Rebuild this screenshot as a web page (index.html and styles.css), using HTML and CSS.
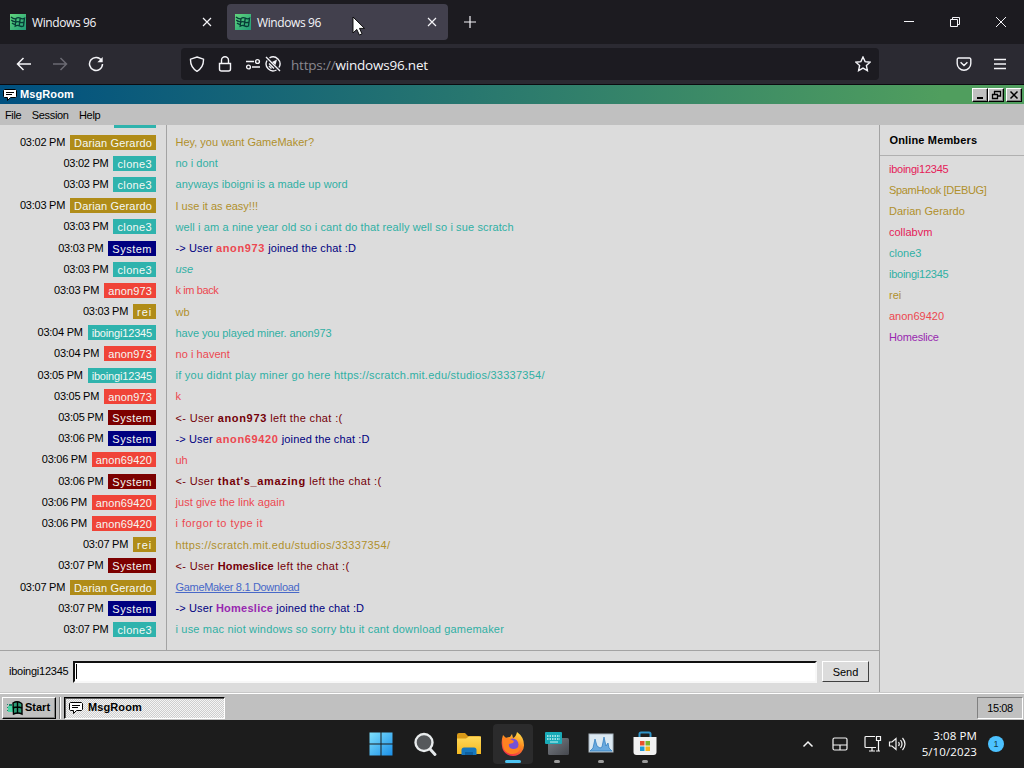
FILE: index.html
```
<!DOCTYPE html>
<html lang="en">
<head>
<meta charset="utf-8">
<title>Windows 96</title>
<link rel="stylesheet" href="styles.css">
</head>
<body>
<svg width="0" height="0" class="defs">
  <defs>
    <linearGradient id="fav" x1="0" y1="0" x2="1" y2="1"><stop offset="0" stop-color="#62d67c"/><stop offset="1" stop-color="#1f9a78"/></linearGradient>
    <linearGradient id="win" x1="0" y1="0" x2="1" y2="1"><stop offset="0" stop-color="#7fe0fb"/><stop offset="1" stop-color="#1a8fe8"/></linearGradient>
    <linearGradient id="folder" x1="0" y1="0" x2="0" y2="1"><stop offset="0" stop-color="#ffd95a"/><stop offset="1" stop-color="#f5b921"/></linearGradient>
    <linearGradient id="fox" x1=".8" y1="0" x2=".3" y2="1"><stop offset="0" stop-color="#ffe14a"/><stop offset=".45" stop-color="#ff8a1f"/><stop offset="1" stop-color="#f0284f"/></linearGradient>
    <linearGradient id="term" x1="0" y1="0" x2="1" y2="1"><stop offset="0" stop-color="#7b7f86"/><stop offset="1" stop-color="#45484e"/></linearGradient>
    <symbol id="favicon" viewBox="0 0 16 16">
      <rect width="16" height="16" fill="url(#fav)"/>
      <g fill="none" stroke="#073c36" stroke-width="1.3"><path d="M6 4.500q2-1.500 4.300-.3t4.200 0L13.500 12q-2 1-4-.1t-4.300.2zM10.200 4.300l-1 7.500M5.800 8.100q2-1 4 0t4.100 0M1 3q2.500 2.300 5 1.800M1.300 6q2 2 4.400 1.600M2 9q1.600 1.600 3.400 1.200"/></g>
    </symbol>
    <symbol id="bubble" viewBox="0 0 16 16">
      <path d="M2.500 2.500h11l1 1v6l-1 1h-5l-3 3v-3h-3l-1-1v-6z" fill="#fff" stroke="#000"/>
      <path d="M4 5.500h8M4 7.500h6" stroke="#000"/>
    </symbol>
  </defs>
</svg>

<header class="tabs">
  <div class="tab"><svg class="fav"><use href="#favicon"/></svg><span>Windows 96</span><svg class="tab-x" viewBox="0 0 10 10"><path d="M1 1l8 8M9 1l-8 8"/></svg></div>
  <div class="tab active"><svg class="fav"><use href="#favicon"/></svg><span>Windows 96</span><svg class="tab-x" viewBox="0 0 10 10"><path d="M1 1l8 8M9 1l-8 8"/></svg></div>
  <svg class="plus" viewBox="0 0 12 12"><path d="M6 0v12M0 6h12"/></svg>
  <div class="win-controls">
    <svg viewBox="0 0 12 12"><path d="M1 5.500h10"/></svg>
    <svg viewBox="0 0 12 12"><path d="M1.500 3.500h7v7h-7zM3.500 3.500v-2h7v7h-2"/></svg>
    <svg viewBox="0 0 12 12"><path d="M1 1l10 10M11 1L1 11"/></svg>
  </div>
</header>

<nav class="toolbar">
  <svg class="nav-icon" viewBox="0 0 16 16"><path d="M15 8H1.500M7.500 2l-6 6 6 6"/></svg>
  <svg class="nav-icon dim" viewBox="0 0 16 16"><path d="M1 8h13.500M8.500 2l6 6-6 6"/></svg>
  <svg class="nav-icon" viewBox="0 0 16 16"><path d="M13.600 4.600A6.500 6.500 0 1 0 14.500 8"/><path d="M14.700 1v5.300H9.400z" class="solid"/></svg>
  <div class="urlbar">
    <svg class="i-shield" viewBox="0 0 16 16"><path d="M8 1L14.500 3.200C14.700 9 13 12.500 8 15.300C3 12.500 1.300 9 1.500 3.200z"/></svg>
    <svg class="i-lock" viewBox="0 0 16 16"><path d="M2.500 7.500h11v5.500a2 2 0 0 1-2 2h-7a2 2 0 0 1-2-2zM4.500 7.500V4.300a3.500 3.500 0 0 1 7 0v3.200"/></svg>
    <svg class="i-perm" viewBox="0 0 16 16"><path d="M1 5.500h8M7 11h8"/><circle cx="12.500" cy="5.500" r="1.900"/><circle cx="3.500" cy="11" r="1.900"/></svg>
    <svg class="i-auto" viewBox="0 0 16 16"><path d="M4.500 1.900A7 7 0 0 1 14 11.500M11.500 14A7 7 0 0 1 2 4.500M1 1l14 14M4 7.500l5 5M4 10l2.500 2.500"/><path class="solid" d="M7 6l5-2.500L10.500 9z"/></svg>
    <span class="url"><i>https://</i>windows96.net</span>
    <svg class="i-star" viewBox="0 0 16 16"><path d="M8 1l2.100 4.600 5 .6-3.700 3.400 1 5L8 12.100l-4.400 2.500 1-5L.9 6.200l5-.6z"/></svg>
  </div>
  <svg class="i-pocket" viewBox="0 0 16 16"><path d="M2.500 2h11a1.300 1.300 0 0 1 1.300 1.300V7.500a6.800 6.800 0 0 1-13.600 0V3.300A1.300 1.300 0 0 1 2.500 2zM4.600 6.200L8 9.500l3.400-3.300"/></svg>
  <svg class="i-menu" viewBox="0 0 12 12"><path d="M0 1.500h12M0 6h12M0 10.500h12"/></svg>
</nav>

<main class="desktop">
  <div class="titlebar">
    <svg class="bubble"><use href="#bubble"/></svg><b>MsgRoom</b>
    <div class="caption">
      <button><svg viewBox="0 0 12 10"><path d="M3 8h6" stroke-width="2"/></svg></button><button><svg viewBox="0 0 12 10"><path d="M4 1.500h6.500v4.500H8M4.500 1v3M2 4.500h6M2.500 4v4.500h5V4" stroke-width="1.300"/></svg></button><button class="close"><svg viewBox="0 0 12 10"><path d="M2.500 1.500l7 7M9.500 1.500l-7 7" stroke-width="1.500"/></svg></button>
    </div>
  </div>
  <div class="menubar"><span>File</span><span>Session</span><span>Help</span></div>

  <div class="app">
    <section class="chat">
      <div class="log">
        <div class="row"><div class="who"><span class="tag teal clipped"></span></div></div>
        <div class="row"><div class="who"><time>03:02 PM</time><span class="tag gold s15">Darian Gerardo</span></div><p class="t-gold">Hey, you want GameMaker?</p></div>
        <div class="row"><div class="who"><time>03:02 PM</time><span class="tag teal s35">clone3</span></div><p class="t-teal">no i dont</p></div>
        <div class="row"><div class="who"><time>03:03 PM</time><span class="tag teal s35">clone3</span></div><p class="t-teal s05">anyways iboigni is a made up word</p></div>
        <div class="row"><div class="who"><time>03:03 PM</time><span class="tag gold s15">Darian Gerardo</span></div><p class="t-gold">I use it as easy!!!</p></div>
        <div class="row"><div class="who"><time>03:03 PM</time><span class="tag teal s35">clone3</span></div><p class="t-teal s12">well i am a nine year old so i cant do that really well so i sue scratch</p></div>
        <div class="row"><div class="who"><time>03:03 PM</time><span class="tag navy s50">System</span></div><p class="t-navy s12">-&gt; User <b class="t-red">anon973</b> joined the chat :D</p></div>
        <div class="row"><div class="who"><time>03:03 PM</time><span class="tag teal s35">clone3</span></div><p class="t-teal"><em>use</em></p></div>
        <div class="row"><div class="who"><time>03:03 PM</time><span class="tag red s15">anon973</span></div><p class="t-red n40">k im back</p></div>
        <div class="row"><div class="who"><time>03:03 PM</time><span class="tag gold s90">rei</span></div><p class="t-gold">wb</p></div>
        <div class="row"><div class="who"><time>03:04 PM</time><span class="tag teal n17">iboingi12345</span></div><p class="t-teal n10">have you played miner. anon973</p></div>
        <div class="row"><div class="who"><time>03:04 PM</time><span class="tag red s15">anon973</span></div><p class="t-red s05">no i havent</p></div>
        <div class="row"><div class="who"><time>03:05 PM</time><span class="tag teal n17">iboingi12345</span></div><p class="t-teal s25">if you didnt play miner go here https://scratch.mit.edu/studios/33337354/</p></div>
        <div class="row"><div class="who"><time>03:05 PM</time><span class="tag red s15">anon973</span></div><p class="t-red">k</p></div>
        <div class="row"><div class="who"><time>03:05 PM</time><span class="tag maroon s50">System</span></div><p class="t-maroon s35">&lt;- User <b>anon973</b> left the chat :(</p></div>
        <div class="row"><div class="who"><time>03:06 PM</time><span class="tag navy s50">System</span></div><p class="t-navy s12">-&gt; User <b class="t-red">anon69420</b> joined the chat :D</p></div>
        <div class="row"><div class="who"><time>03:06 PM</time><span class="tag red s12">anon69420</span></div><p class="t-red">uh</p></div>
        <div class="row"><div class="who"><time>03:06 PM</time><span class="tag maroon s50">System</span></div><p class="t-maroon s35">&lt;- User <b>that's_amazing</b> left the chat :(</p></div>
        <div class="row"><div class="who"><time>03:06 PM</time><span class="tag red s12">anon69420</span></div><p class="t-red s05">just give the link again</p></div>
        <div class="row"><div class="who"><time>03:06 PM</time><span class="tag red s12">anon69420</span></div><p class="t-red s45">i forgor to type it</p></div>
        <div class="row"><div class="who"><time>03:07 PM</time><span class="tag gold s90">rei</span></div><p class="t-gold s35">https://scratch.mit.edu/studios/33337354/</p></div>
        <div class="row"><div class="who"><time>03:07 PM</time><span class="tag maroon s50">System</span></div><p class="t-maroon s35">&lt;- User <b class="s12">Homeslice</b> left the chat :(</p></div>
        <div class="row"><div class="who"><time>03:07 PM</time><span class="tag gold s15">Darian Gerardo</span></div><p class="t-link n32">GameMaker 8.1 Download</p></div>
        <div class="row"><div class="who"><time>03:07 PM</time><span class="tag navy s50">System</span></div><p class="t-navy s12">-&gt; User <b class="t-purple s25">Homeslice</b> joined the chat :D</p></div>
        <div class="row"><div class="who"><time>03:07 PM</time><span class="tag teal s35">clone3</span></div><p class="t-teal s18">i use mac niot windows so sorry btu it cant download gamemaker</p></div>
      </div>
      <div class="compose"><label class="n25">iboingi12345</label><div class="field"><i class="caret"></i></div><button class="send">Send</button></div>
    </section>
    <aside class="members">
      <h2>Online Members</h2>
      <ul>
        <li class="t-pink n25">iboingi12345</li><li class="t-gold n32">SpamHook [DEBUG]</li><li class="t-gold">Darian Gerardo</li><li class="t-pink">collabvm</li><li class="t-teal">clone3</li><li class="t-teal n25">iboingi12345</li><li class="t-gold">rei</li><li class="t-red">anon69420</li><li class="t-purple n17">Homeslice</li>
      </ul>
    </aside>
  </div>

  <footer class="bar96">
    <div class="start"><svg viewBox="0 0 18 16"><path d="M1 4h1v1H1zM3 4h3v2H3zM1 7h1v1H1zM3 7h3v2H3zM1 10h1v1H1zM3 10h3v2H3z" fill="#18856b"/><path d="M2 6h6v6H2z" fill="#4bd7a5"/><path d="M7 3q4-2.500 8 0l1 1v10q-4-2-8.500 0z" fill="#2c9c76" stroke="#000" stroke-width="1.400"/><path d="M11.500 2v11.500M7 8q4-2 9 0" stroke="#000" stroke-width="1.400" fill="none"/></svg><b>Start</b></div>
    <div class="sep"></div>
    <div class="task"><svg class="bubble"><use href="#bubble"/></svg><b>MsgRoom</b></div>
    <div class="clock96">15:08</div>
  </footer>
</main>

<footer class="bar11">
  <div class="apps">
    <div class="app-icon"><svg viewBox="0 0 28 28"><path fill="url(#win)" d="M2.500 2.500h11v11h-11zM14.500 2.500h11v11h-11zM2.500 14.500h11v11h-11zM14.500 14.500h11v11h-11z"/></svg></div>
    <div class="app-icon"><svg viewBox="0 0 28 28"><path d="M19 19l5 5.500" stroke="#e4e8ea" stroke-width="3" stroke-linecap="round"/><circle cx="13" cy="12.500" r="8.500" fill="#55585b" stroke="#e9eced" stroke-width="2.400"/></svg></div>
    <div class="app-icon"><svg viewBox="0 0 28 28"><path d="M2 5a2 2 0 0 1 2-2h6l3 3h11a2 2 0 0 1 2 2v4H2z" fill="#d99a18"/><path d="M2 8.500h9l3-2h12V24H2z" fill="url(#folder)"/><path d="M6.500 25v-5q0-2.500 2.500-2.500h10q2.500 0 2.500 2.500v5z" fill="#1677bd"/><path d="M10 25v-3h8v3z" fill="#0f5f9e"/></svg></div>
    <div class="app-icon on"><svg viewBox="0 0 28 28"><path fill="url(#fox)" d="M4 5l3 3q2-1 4-1l2-3 1 4q3-1 4-6 7 5 7 13a11 10.500 0 0 1-22 1Q2 11 4 5z"/><circle cx="13.500" cy="14.500" r="6" fill="#7551d8"/><path d="M4 8q4-1 7 1l4 2-1 2-4 1q-1 4 4 5 5 0 7-4 1 8-7 9-9 0-10-8z" fill="#ff8221"/></svg><i></i></div>
    <div class="app-icon"><svg viewBox="0 0 28 28"><rect x="5" y="8" width="21" height="17" rx="1.500" fill="url(#term)"/><rect x="2" y="2" width="17" height="12" rx="1" fill="#19abb8"/><path d="M4 6h13M4 9h13" stroke="#c9f4f5" stroke-width="1.500" stroke-dasharray="1.500 1"/><path d="M7 12h8" stroke="#c9f4f5"/></svg><i></i></div>
    <div class="app-icon"><svg viewBox="0 0 28 28"><rect x="2" y="4" width="24" height="18" fill="#dce9f2" stroke="#a9b6bf"/><path d="M3 21l3-3 2-9 2 7 3 2 2-1 2-10 2 9 2-3 1 5 3 3z" fill="#69a9de" stroke="#2879bd" stroke-width=".7"/></svg><i></i></div>
    <div class="app-icon"><svg viewBox="0 0 28 28"><path d="M8.500 8V4q0-1.500 1.500-1.500h8Q19.500 2.500 19.500 4v4" fill="none" stroke="#2f94c9" stroke-width="2"/><path d="M2.500 7h23v15q0 3-3 3h-17q-3 0-3-3z" fill="#f2f2f2"/><path d="M9 11h4.500v4.500H9z" fill="#e8502f"/><path d="M14.500 11H19v4.500h-4.500z" fill="#7ab32e"/><path d="M9 16.500h4.500V21H9z" fill="#1e9bd7"/><path d="M14.500 16.500H19V21h-4.500z" fill="#f3b51c"/></svg><i></i></div>
  </div>
  <div class="tray">
    <svg class="chev" viewBox="0 0 12 8"><path d="M1.500 6.500L6 2l4.500 4.500"/></svg>
    <svg class="pad" viewBox="0 0 16 14"><rect x="1" y="1" width="14" height="12" rx="1.500"/><path d="M1 8h14M8 8v5"/></svg>
    <svg class="net" viewBox="0 0 18 18"><path d="M11 1.500H2a1 1 0 0 0-1 1v9a1 1 0 0 0 1 1h10M5 16h6M8 12.500V16M12.500 1.500h4v4h-4zM14.500 5.500V16M12 16h4"/></svg>
    <svg class="vol" viewBox="0 0 18 16"><path d="M1.500 6v4h2.500l4 3.500v-11L4 6zM10.500 6q1.500 2 0 4M12.500 4q3 4 0 8M14.500 2q5 6 0 12"/></svg>
    <div class="clock"><span>3:08 PM</span><span>5/10/2023</span></div>
    <span class="count">1</span>
  </div>
</footer>

<svg class="cursor" viewBox="0 0 14 20"><path d="M1 1v16l3.800-3.600 2.600 5.600 2.600-1.200-2.500-5.400H12.500z" fill="#fff" stroke="#000" stroke-width=".9"/></svg>
</body>
</html>
```
FILE: styles.css
```
* { box-sizing: border-box; }
body {
  margin: 0; width: 1024px; height: 768px; overflow: hidden; position: relative;
  display: flex; flex-direction: column; background: #1c1c1c;
  font: 11px/15px "Liberation Sans", sans-serif; color: #000;
}
svg { display: block; flex: none; }
.defs { position: absolute; }
p, h2, ul { margin: 0; padding: 0; }

/* browser tabs */
.tabs { height: 44px; background: #1c1b20; display: flex; align-items: center; padding: 0 5px 0 2px; flex: none;
  font: 12px "Open Sans", "Noto Sans", sans-serif; letter-spacing: -.4px; color: #f4f4f8; }
.tab { width: 221px; height: 36px; display: flex; align-items: center; padding: 0 11px 0 8px; margin-right: 4px; border-radius: 4px; }
.tab.active { background: #42404d; }
.fav { width: 16px; height: 16px; margin-right: 6px; }
.tab-x { width: 10px; height: 10px; margin-left: auto; }
.tabs svg:not(.fav), .toolbar svg { fill: none; stroke: #f4f4f8; stroke-width: 1.200; }
.plus { width: 12px; height: 12px; margin-left: 12px; }
.win-controls { margin-left: auto; display: flex; gap: 34px; padding-right: 12px; }
.win-controls svg { width: 12px; height: 12px; stroke-width: 1 !important; }

/* browser toolbar */
.toolbar { height: 41px; flex: none; background: #2b2a32; border-bottom: 1px solid #0b0b10; display: flex; align-items: center; padding: 0 12px 0 16px; }
.toolbar .nav-icon { width: 16px; height: 16px; margin-right: 20px; stroke-width: 1.500; }
.toolbar .dim { stroke: #6b6a73; }
.toolbar .solid { fill: #f4f4f8; stroke: none; }
.urlbar { width: 698px; height: 32px; margin-left: 57px; background: #1c1b21; border-radius: 4px; display: flex; align-items: center; padding: 0 8px; }
.urlbar svg { width: 16px; height: 16px; stroke-width: 1.400; }
.urlbar .i-lock, .urlbar .i-perm { margin-left: 12px; }
.urlbar .i-auto { margin-left: 4px; }
.url { margin-left: 10px; padding-top: 2px; font: 13.500px "Open Sans", "Noto Sans", sans-serif; letter-spacing: -.2px; color: #f4f4f8; }
.url i { font-style: normal; color: #89888f; }
.urlbar .i-star { margin-left: auto; }
.toolbar .i-pocket { width: 16px; height: 16px; margin-left: auto; margin-right: 22px; stroke-width: 1.400; }
.toolbar .i-menu { width: 12px; height: 12px; margin-right: 6px; stroke-width: 1.300; }

/* application window */
.desktop { flex: 1; display: flex; flex-direction: column; min-height: 0; background: #dcdcdc; }
.titlebar { height: 19px; flex: none; display: flex; align-items: center; padding: 0 2px; color: #fff; background: linear-gradient(90deg, #005080, #509e5e 92%); }
.bubble { width: 16px; height: 16px; margin-right: 2px; }
.titlebar b, .task b { letter-spacing: .1px; }
.caption { margin-left: auto; display: flex; }
.caption button { width: 16px; height: 14px; padding: 0; background: #c0c0c0; border: 1px solid; border-color: #fff #000 #000 #fff; box-shadow: inset -1px -1px #808080; display: flex; align-items: center; justify-content: center; }
.caption .close { margin-left: 2px; }
.caption svg { width: 12px; height: 10px; fill: none; stroke: #000; }
.menubar { height: 21px; flex: none; background: #c0c0c0; display: flex; align-items: center; gap: 10.500px; padding: 1px 5px 0; letter-spacing: -.35px; }

.app { flex: 1; min-height: 0; display: flex; }
.chat { width: 880px; border-right: 1px solid #a3a3a3; display: flex; flex-direction: column; }
.log { flex: 1; min-height: 0; overflow: hidden; display: flex; flex-direction: column; justify-content: flex-end; padding-bottom: 9px;
  background: linear-gradient(#a3a3a3, #a3a3a3) 166px 0 / 1px 100% no-repeat; }
.row { height: 21.200px; flex: none; display: flex; align-items: center; }
.who { width: 156px; flex: none; display: flex; justify-content: flex-end; align-items: center; gap: 5px; margin: -2px 20px 0 0; white-space: nowrap; }
time { letter-spacing: -.25px; }
.tag { height: 15px; line-height: 16px; padding: 0 4px; color: #f4f8f4; }
.clipped { width: 42px; }
.row p { white-space: pre; line-height: 15px; margin: -1px 0 0 -.5px; }
.row b { letter-spacing: .65px; }

/* letter spacing steps */
.s05 { letter-spacing: .05px; } .s12 { letter-spacing: .12px; } .s15 { letter-spacing: .15px; } .s18 { letter-spacing: .18px; }
.s25 { letter-spacing: .25px; } .s35 { letter-spacing: .35px; } .s45 { letter-spacing: .45px; } .s50 { letter-spacing: .5px; } .s90 { letter-spacing: .9px; }
.n10 { letter-spacing: -.1px; } .n17 { letter-spacing: -.17px; } .n25 { letter-spacing: -.25px; } .n32 { letter-spacing: -.32px; } .n40 { letter-spacing: -.4px; }
.row b.s12 { letter-spacing: .12px; } .row b.s25 { letter-spacing: .25px; }

.gold { background: #b08c18; } .teal { background: #2fb3ad; } .red { background: #f04438; } .navy { background: #000080; } .maroon { background: #7c0000; }
.t-gold { color: #b0902c; } .t-teal { color: #30b0a4; } .t-red { color: #ec4850; } .t-navy { color: #000080; } .t-maroon { color: #740008; }
.t-pink { color: #e52058; } .t-purple { color: #9828b0; }
.t-link { color: #4868c8; text-decoration: underline; }

.compose { height: 42px; flex: none; border-top: 1px solid #a3a3a3; display: flex; align-items: center; padding: 0 10px 0 9px; }
.compose label { width: 64px; }
.field { flex: 1; height: 22px; background: #fff; border: 2px solid; border-color: #101010 #f8f8f8 #f8f8f8 #101010; padding: 1px; }
.caret { display: block; width: 1px; height: 15px; background: #000; }
.send { width: 47px; height: 21px; margin-left: 5px; padding: 1px 0 0; font: inherit; background: #dcdcdc; border: 1px solid; border-color: #fff #404040 #404040 #fff; }

.members { flex: 1; }
.members h2 { height: 31px; font-size: 11px; line-height: 31px; padding-left: 9.500px; letter-spacing: .15px; border-bottom: 1px solid #b0b0b0; }
.members ul { list-style: none; padding: 3px 0 0 9px; }
.members li { height: 21px; line-height: 21px; }

/* inner taskbar */
.bar96 { height: 28px; flex: none; display: flex; align-items: center; background: #c0c0c0; border-top: 1px solid #c8c8c8; box-shadow: inset 0 1px #fff; padding: 2px 2px 0; }
.start { width: 54px; height: 22px; display: flex; align-items: center; padding-left: 3px; border: 1px solid; border-color: #fff #000 #000 #fff; box-shadow: inset -1px -1px #808080; }
.start svg { width: 18px; height: 16px; margin-right: 1px; }
.sep { width: 2px; height: 22px; margin: 0 3px; border-left: 1px solid #808080; border-right: 1px solid #fff; }
.task { width: 161px; height: 22px; display: flex; align-items: center; padding-left: 3px; border: 1px solid; border-color: #000 #fff #fff #000; box-shadow: inset 1px 1px #606060;
  background: repeating-conic-gradient(#f4f4f4 0 25%, #cecece 0 50%) 0 0 / 2px 2px; }
.task .bubble { margin-right: 4px; }
.clock96 { width: 46px; height: 22px; margin-left: auto; margin-right: -1px; line-height: 20px; text-align: center; letter-spacing: -.4px; border: 1px solid; border-color: #808080 #fff #fff #808080; }

/* host taskbar */
.bar11 { height: 48px; flex: none; display: flex; align-items: center; background: #1c1c1c; }
.apps { display: flex; gap: 4px; margin-left: 360.500px; }
.app-icon { width: 40px; height: 40px; border-radius: 4px; display: flex; flex-direction: column; align-items: center; padding-top: 6px; }
.app-icon svg { width: 28px; height: 28px; }
.app-icon i { width: 6px; height: 3px; border-radius: 2px; background: #9b9b9b; margin-top: 2px; }
.app-icon.on { background: #2b2b2c; }
.app-icon.on i { width: 16px; background: #4cc2f0; }
.tray { margin-left: auto; display: flex; align-items: center; padding-right: 20px; }
.tray svg { fill: none; stroke: #f4f4f4; stroke-width: 1.200; }
.tray .chev { width: 12px; height: 8px; stroke-width: 1.500; }
.pad { width: 16px; height: 14px; margin-left: 18px; }
.net { width: 18px; height: 18px; margin-left: 16px; }
.vol { width: 18px; height: 16px; margin-left: 6px; }
.clock { width: 71px; display: flex; flex-direction: column; align-items: flex-end; font: 11.500px/16px "Open Sans", "Noto Sans", sans-serif; letter-spacing: .1px; color: #fff; }
.count { width: 16px; height: 16px; margin-left: 11px; border-radius: 50%; background: #4cc2ff; font-size: 9px; line-height: 16px; text-align: center; color: #103848; }
.cursor { position: absolute; left: 352px; top: 16px; width: 14px; height: 20px; }
```
